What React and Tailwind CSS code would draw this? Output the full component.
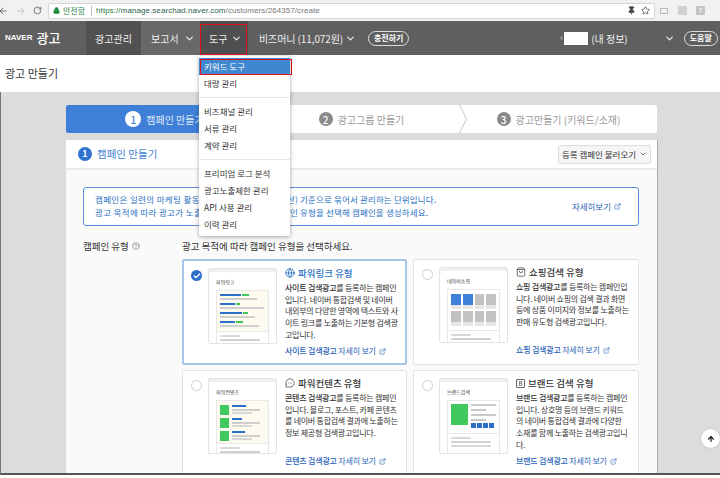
import {
  ArrowLeft,
  ArrowRight,
  ArrowUp,
  ChevronDown,
  CircleHelp,
  Check,
  ExternalLink,
  Globe,
  Lock,
  MessageCircleMore,
  RotateCw,
  ShoppingBag,
  Star,
  Pin,
} from "lucide-react";

const font = "font-['Noto_Sans_CJK_KR','Noto_Sans',sans-serif]";

const Bar = ({ className }) => <div className={`h-[2px] rounded-[1px] ${className}`} />;

const ThumbFrame = ({ label, children, tail = 1 }) => (
  <div className="w-[69px] h-[76px] shrink-0 bg-white border border-[#e4e4e4] rounded-[2px] overflow-hidden">
    <div className="h-[3px] bg-[#efefef]" />
    <div className="pl-[7px] pt-[6px] pb-[4px] text-[5px] leading-[8px] text-[#444]">{label}</div>
    <div className="mx-[7px] border border-[#e8e8e8] border-b-0 h-[58px]">
      {children}
      <div className="border-t border-[#e8e8e8] bg-white px-[3px] pt-[3px]">
        <Bar className="w-[20px] bg-[#d8d8d8]" />
        <Bar className="w-[40px] mt-[2px] bg-[#d0d0d0]" />
        {tail > 1 && <Bar className="w-[40px] mt-[2px] bg-[#d8d8d8]" />}
      </div>
    </div>
  </div>
);

const PowerLinkThumb = () => (
  <ThumbFrame label="파워링크">
    <div className="h-[40px] bg-[#fdfbf0] px-[3px] pt-[3px] flex flex-col gap-[1px]">
      {[
        [21, 7, 37],
        [15, 4, 44],
        [22, 5, 35],
        [15, 7, 39],
      ].map(([a, b, c], i) => (
        <div key={i} className="h-[8px]">
          <div className="flex gap-[1px]">
            <div className="h-[2px] bg-[#2d6fc8]" style={{ width: a }} />
            <div className="h-[2px] bg-[#41c85f]" style={{ width: b }} />
          </div>
          <div className="h-[2px] mt-[2px] bg-[#cfcfcf]" style={{ width: c }} />
        </div>
      ))}
    </div>
  </ThumbFrame>
);

const ShoppingThumb = () => (
  <ThumbFrame label="네이버쇼핑">
    <div className="h-[40px] px-[3px] pt-[4px] grid grid-cols-4 gap-[2px] content-start bg-white">
      {[0, 1, 2, 3, 4, 5, 6, 7].map((i) => (
        <div
          key={i}
          className={`h-[15px] border-b-[4px] border-[#e6e6e6] ${i < 2 ? "bg-[#4080d8]" : "bg-[#c2c2c2]"}`}
        />
      ))}
    </div>
  </ThumbFrame>
);

const ContentThumb = () => (
  <ThumbFrame label="파워컨텐츠">
    <div className="h-[42px] bg-[#fdfbf0] px-[3px] pt-[4px] flex flex-col gap-[3px]">
      {[14, 10, 13].map((w, i) => (
        <div key={i} className="flex gap-[3px]">
          <div className="w-[9px] h-[10px] bg-[#41c85f]" />
          <div>
            <div className="h-[2px] bg-[#2d6fc8]" style={{ width: w }} />
            <div className="h-[2px] mt-[2px] w-[28px] bg-[#cfcfcf]" />
            <div className="h-[2px] mt-[1px] w-[20px] bg-[#d8d8d8]" />
          </div>
        </div>
      ))}
    </div>
  </ThumbFrame>
);

const BrandThumb = () => (
  <ThumbFrame label="브랜드검색" tail={2}>
    <div className="h-[32px] px-[3px] pt-[3px] flex gap-[3px] bg-white">
      <div className="w-[18px] h-[21px] bg-[#41c85f]" />
      <div>
        <div className="h-[2px] w-[25px] bg-[#c8c8c8]" />
        <div className="h-[2px] mt-[3px] w-[15px] bg-[#c8c8c8]" />
        <div className="h-[2px] mt-[3px] w-[25px] bg-[#c8c8c8]" />
        <div className="h-[2px] mt-[3px] w-[15px] bg-[#c8c8c8]" />
        <div className="flex gap-[1px] mt-[2px]">
          <div className="w-[5px] h-[5px] bg-[#2d6fc8]" />
          <div className="w-[5px] h-[5px] bg-[#2d6fc8]" />
          <div className="w-[5px] h-[5px] bg-[#2d6fc8]" />
          <div className="w-[5px] h-[5px] bg-[#2d6fc8]" />
        </div>
      </div>
    </div>
  </ThumbFrame>
);

const TypeCard = ({ selected, icon, title, lead, lines, link, thumb, grow }) => (
  <div
    className={`h-[106px] bg-white rounded-[2px] pt-[7px] flex items-start border ${
      selected ? "border-[#a9c6ea] border-2 pl-[7px] pt-[6px]" : "border-[#e2e2e2] pl-[8px]"
    } ${grow ? "w-[226px]" : "w-[225px]"}`}
  >
    {selected ? (
      <div className="w-[11px] h-[11px] mt-[2px] rounded-full bg-[#2f6fca] flex items-center justify-center shrink-0">
        <Check size={8} strokeWidth={4} color="#fff" />
      </div>
    ) : (
      <div className="w-[11px] h-[11px] mt-[2px] rounded-full border border-[#ccc] bg-white shrink-0" />
    )}
    <div className="ml-[6px]">{thumb}</div>
    <div className="ml-[8px] -mt-[1px] w-[114px] shrink-0">
      <div className={`flex items-center gap-[3px] h-[12px] text-[9.5px] font-medium ${selected ? "text-[#2a6fc4]" : "text-[#333]"}`}>
        {icon}
        <span>{title}</span>
      </div>
      <div className="mt-[3px] h-[58px] text-[8px] tracking-[-0.25px] leading-[11.7px] text-[#333] whitespace-nowrap">
        {lines.map((l, i) => (
          <div key={i}>
            {i === 0 && <span className="font-medium">{lead} </span>}
            {l}
          </div>
        ))}
      </div>
      <div className="mt-[5px] flex items-center gap-[3px] text-[8px] tracking-[-0.2px] leading-[12px] text-[#2a62b8] whitespace-nowrap">
        <span>
          <span className="font-medium">{link}</span> 자세히 보기
        </span>
        <ExternalLink size={7} />
      </div>
    </div>
  </div>
);

const NavChevron = () => <ChevronDown size={11} strokeWidth={2.5} color="#eee" />;

const Step = ({ n, label, active }) => (
  <div className={`flex-1 flex items-center justify-center gap-[5px] ${active ? "bg-[#3f7fd8] text-[#dfeaf8] rounded-l-[2px]" : "text-[#999]"}`}>
    <span
      className={`w-[14px] h-[14px] rounded-full flex items-center justify-center text-[10px] font-medium ${
        active ? "w-[16px] h-[16px] bg-white text-[#3f7fd8]" : "bg-[#8a8a8a] text-white"
      }`}
    >
      {n}
    </span>
    <span className="text-[10px]">{label}</span>
  </div>
);

const MenuItem = ({ children, active }) => (
  <div className={`h-[17px] pl-[5px] flex items-center text-[8.5px] whitespace-nowrap ${active ? "bg-[#3f87cf] text-white" : "text-[#333]"}`}>
    {children}
  </div>
);

export default function App() {
  return (
    <div className={`relative w-[720px] h-[478px] overflow-hidden bg-white ${font}`}>
      {/* browser bar */}
      <div className="h-[21px] bg-[#f1f1f1] flex items-center">
        <ArrowLeft size={10} color="#555" className="-ml-[2px]" />
        <ArrowRight size={10} color="#bbb" className="ml-[8px]" />
        <RotateCw size={9} color="#555" className="ml-[7px]" />
        <div className="ml-[6px] w-[607px] h-[16px] bg-white border border-[#d5d5d5] rounded-[2px] flex items-center pl-[4px]">
          <Lock size={7} color="#1a8a3a" fill="#1a8a3a" />
          <span className="ml-[3px] text-[8px] text-[#2a8a4a]">안전함</span>
          <span className="ml-[6px] w-px h-[10px] bg-[#bbb]" />
          <span className="ml-[4px] text-[8px] tracking-[0.07px] font-['Liberation_Sans',sans-serif] text-[#1f7a3f]">
            https://<span className="text-[#2f5f4f]">manage.searchad.naver.com</span>
            <span className="text-[#777]">/customers/264357/create</span>
          </span>
          <div className="ml-auto mr-[4px] flex items-center gap-[5px]">
            <Pin size={9} color="#444" fill="#444" />
            <Star size={9} color="#444" />
          </div>
        </div>
        <div className="ml-[5px] flex items-center">
          <span className="w-[8px] h-[6px] border border-[#bbb]" />
          <span className="ml-[10px] w-[9px] h-[9px] bg-[#d0d0d0]" />
          <span className="ml-[9px] w-[9px] h-[9px] bg-[#c4c4c4] text-[6px] leading-[9px] text-center text-white">T</span>
        </div>
      </div>

      {/* top nav */}
      <div className="h-[34px] bg-[#5f5f5f] flex items-stretch text-[10px] text-[#eee]">
        <div className="w-[86px] pl-[5px] flex items-center gap-[4px] text-white">
          <span className="text-[8px] font-bold font-['Liberation_Sans',sans-serif]">NAVER</span>
          <span className="text-[13px] font-medium">광고</span>
        </div>
        <div className="w-[55px] bg-[#515151] flex items-center justify-center">광고관리</div>
        <div className="w-[59px] bg-[#686868] pl-[10px] flex items-center gap-[5px]">
          보고서 <NavChevron />
        </div>
        <div className="w-[48px] bg-[#4f4f4f] pl-[9px] flex items-center gap-[4px]">
          도구 <NavChevron />
        </div>
        <div className="ml-[11px] flex items-center gap-[2px] whitespace-nowrap tracking-[-0.1px]">
          비즈머니 (11,072원) <NavChevron />
        </div>
        <div className="ml-[12px] self-center w-[41px] h-[15px] rounded-full border border-[#ddd] flex items-center justify-center text-[8px] font-bold text-white">
          충전하기
        </div>
        <div className="ml-[151px] flex items-center">
          <span className="text-[9px] w-[4px] text-[#ddd]">‹</span>
          <span className="w-[24px] h-[13px] bg-white" />
          <span className="ml-[3px] text-[10px] whitespace-nowrap">(내 정보)</span>
        </div>
        <div className="ml-[36px] flex items-center">
          <NavChevron />
        </div>
        <div className="ml-[9px] self-center w-[34px] h-[15px] rounded-full border border-[#ddd] flex items-center justify-center text-[8px] font-bold text-white">
          도움말
        </div>
      </div>

      {/* page title */}
      <div className="h-[37px] pl-[5px] flex items-center text-[11px] text-[#333]">광고 만들기</div>

      {/* content */}
      <div className="h-[383px] bg-[#dcdcdc] border-l border-[#777] border-b-2 border-b-[#555] pl-[65px] pt-[13px] overflow-hidden">
        <div className="w-[591px] h-[28px] bg-white flex rounded-[2px] relative">
          <Step n="1" label="캠페인 만들기" active />
          <Step n="2" label="광고그룹 만들기" />
          <Step n="3" label="광고만들기 (키워드/소재)" />
          <svg className="absolute left-[393px] top-0" width="9" height="28" viewBox="0 0 9 28">
            <path d="M0.5 0 L7.5 14 L0.5 28" fill="none" stroke="#c8c8c8" />
          </svg>
        </div>

        <div className="mt-[7px] w-[592px] h-[400px] bg-[#fafafa] border-r border-[#aaa]">
          <div className="h-[30px] bg-white border-b-2 border-[#ececec] flex items-center pl-[12px] pr-[6px]">
            <span className="w-[14px] h-[14px] rounded-full bg-[#2f72d0] text-white text-[9px] font-bold flex items-center justify-center">
              1
            </span>
            <span className="ml-[5px] text-[10.5px] text-[#3f7fd0]">캠페인 만들기</span>
            <div className="ml-auto w-[93px] h-[19px] border border-[#ddd] rounded-[2px] bg-[#f6f6f6] flex items-center justify-center gap-[3px] text-[8.5px] text-[#333]">
              등록 캠페인 불러오기 <ChevronDown size={8} />
            </div>
          </div>

          <div className="pl-[17px] pt-[17px]">
            <div className="w-[556px] h-[39px] bg-white border border-[#5b8fd8] rounded-[3px] pl-[11px] pb-[1px] flex items-center text-[8.5px] tracking-[0.15px] leading-[13px] text-[#2a6fc4]">
              <div className="whitespace-nowrap">
                <div className="flex">
                  <span className="w-[192px] tracking-[0.35px]">캠페인은 일련의 마케팅 활동을</span>
                  <span>산) 기준으로 묶어서 관리하는 단위입니다.</span>
                </div>
                <div className="flex">
                  <span className="w-[195px] tracking-[0.35px]">광고 목적에 따라 광고가 노출되</span>
                  <span>인 유형을 선택해 캠페인을 생성하세요.</span>
                </div>
              </div>
              <div className="ml-auto mr-[17px] flex items-center gap-[3px] text-[#2a62b8] tracking-normal whitespace-nowrap">
                자세히보기 <ExternalLink size={7} />
              </div>
            </div>

            <div className="mt-[14px] flex items-center h-[12px] text-[9.5px] text-[#333]">
              <div className="w-[99px] flex items-center gap-[3px]">
                캠페인 유형 <CircleHelp size={8} color="#777" />
              </div>
              <div>광고 목적에 따라 캠페인 유형을 선택하세요.</div>
            </div>

            <div className="mt-[7px] ml-[99px] grid grid-cols-[225px_226px] gap-x-[6px] gap-y-[5px] w-[457px]">
              <TypeCard
                selected
                icon={<Globe size={10} color="#2a6fc4" />}
                title="파워링크 유형"
                lead="사이트 검색광고를"
                lines={[
                  "등록하는 캠페인",
                  "입니다. 네이버 통합검색 및 네이버",
                  "내외부의 다양한 영역에 텍스트와 사",
                  "이트 링크를 노출하는 기본형 검색광",
                  "고입니다.",
                ]}
                link="사이트 검색광고"
                thumb={<PowerLinkThumb />}
              />
              <TypeCard
                grow
                icon={<ShoppingBag size={10} color="#555" />}
                title="쇼핑검색 유형"
                lead="쇼핑 검색광고를"
                lines={[
                  "등록하는 캠페인입",
                  "니다. 네이버 쇼핑의 검색 결과 화면",
                  "등에 상품 이미지와 정보를 노출하는",
                  "판매 유도형 검색광고입니다.",
                ]}
                link="쇼핑 검색광고"
                thumb={<ShoppingThumb />}
              />
              <TypeCard
                icon={<MessageCircleMore size={10} color="#555" />}
                title="파워컨텐츠 유형"
                lead="콘텐츠 검색광고를"
                lines={[
                  "등록하는 캠페인",
                  "입니다. 블로그, 포스트, 카페 콘텐츠",
                  "를 네이버 통합검색 결과에 노출하는",
                  "정보 제공형 검색광고입니다.",
                ]}
                link="콘텐츠 검색광고"
                thumb={<ContentThumb />}
              />
              <TypeCard
                grow
                icon={
                  <span className="w-[9px] h-[9px] border border-[#666] rounded-[1px] text-[6px] leading-[7px] text-center text-[#555]">B</span>
                }
                title="브랜드 검색 유형"
                lead="브랜드 검색광고를"
                lines={[
                  "등록하는 캠페인",
                  "입니다. 상호명 등의 브랜드 키워드",
                  "의 네이버 통합검색 결과에 다양한",
                  "소재를 함께 노출하는 검색광고입니",
                  "다.",
                ]}
                link="브랜드 검색광고"
                thumb={<BrandThumb />}
              />
            </div>
          </div>
        </div>
      </div>

      {/* tools dropdown */}
      <div className="absolute left-[199px] top-[56px] w-[91px] h-[180px] bg-white rounded-b-[2px] shadow-[0_1px_4px_rgba(0,0,0,0.35)] pt-[2px]">
        <MenuItem active>키워드 도구</MenuItem>
        <MenuItem>대량 관리</MenuItem>
        <div className="my-[5px] h-px bg-[#e6e6e6]" />
        <MenuItem>비즈채널 관리</MenuItem>
        <MenuItem>서류 관리</MenuItem>
        <MenuItem>계약 관리</MenuItem>
        <div className="my-[5px] h-px bg-[#e6e6e6]" />
        <MenuItem>프리미엄 로그 분석</MenuItem>
        <MenuItem>광고노출제한 관리</MenuItem>
        <MenuItem>API 사용 관리</MenuItem>
        <MenuItem>이력 관리</MenuItem>
      </div>

      {/* red highlight boxes from the screenshot annotation */}
      <div className="absolute left-[200px] top-[24px] w-[47px] h-[31px] border border-[#e0141e]" />
      <div className="absolute left-[200px] top-[59px] w-[92px] h-[16px] border-[1.5px] border-[#d8101a]" />

      {/* scroll to top */}
      <div className="absolute left-[701px] top-[429px] w-[19px] h-[19px] rounded-full bg-white flex items-center justify-center shadow-[0_0_2px_rgba(0,0,0,0.2)]">
        <ArrowUp size={8} strokeWidth={4} color="#222" />
      </div>
    </div>
  );
}
